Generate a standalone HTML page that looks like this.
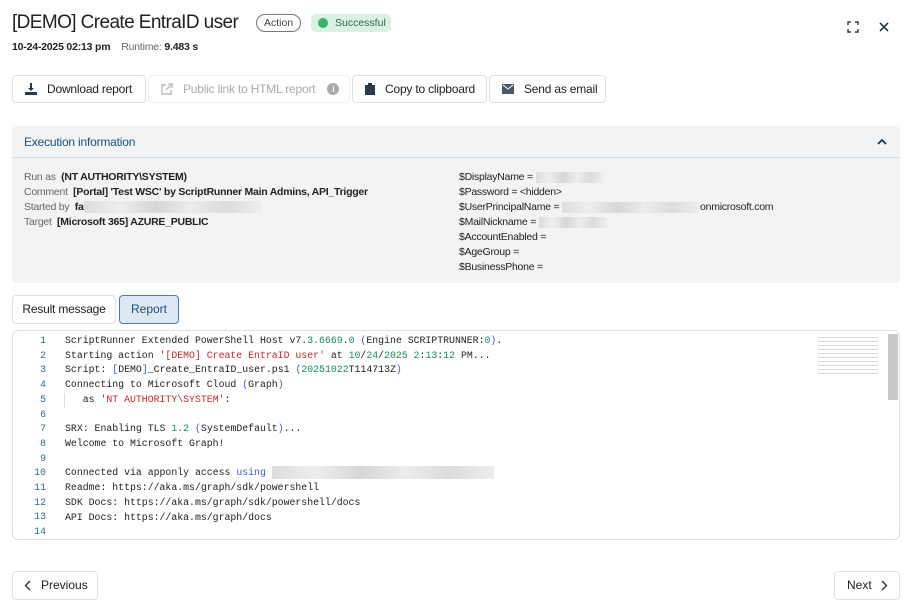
<!DOCTYPE html>
<html><head><meta charset="utf-8"><style>
*{box-sizing:border-box;margin:0;padding:0}
body{width:906px;height:606px;background:#fff;font-family:"Liberation Sans",sans-serif;color:#222;position:relative;overflow:hidden}
.abs{position:absolute}
.btn{position:absolute;top:75px;height:28px;border:1px solid #dde1e6;border-radius:4px;font-size:12px;display:flex;align-items:center;padding-left:12px;color:#222;background:#fff;letter-spacing:-0.2px}
.btn svg{margin-right:10px}
.code{font-family:"Liberation Mono",monospace;font-size:9.85px;line-height:14.7px;white-space:pre;color:#222}
.ln{position:absolute;left:14px;width:32px;text-align:right;color:#2a6f97;font-family:"Liberation Mono",monospace;font-size:9.85px;line-height:14.7px}
.s{color:#c0282d}.n{color:#1a8a5a}.b{color:#3b5bdb}
.blur{display:inline-block;background:linear-gradient(90deg,#ddd,#eee,#d6d6d6,#ececec,#dcdcdc,#eee);vertical-align:middle}
.ei{font-size:10.5px;line-height:15px;color:#222;letter-spacing:-0.25px}
.ei .k{color:#666}
</style></head><body>
<div class="abs" style="left:12px;top:12px;font-size:19px;letter-spacing:-0.6px;color:#222">[DEMO] Create EntraID user</div>
<div class="abs" style="left:256px;top:14px;height:18px;padding:0 7px;border:1px solid #777;border-radius:9px;font-size:10.5px;line-height:16px;color:#444">Action</div>
<div class="abs" style="left:311px;top:14px;height:18px;width:80px;background:#d9f2e1;border-radius:5px;font-size:10.5px;line-height:18px;color:#2a6b40;padding-left:24px">Successful
<span class="abs" style="left:7px;top:4px;width:10px;height:10px;border-radius:50%;background:#3bb36a"></span></div>
<div class="abs" style="left:12px;top:41px;font-size:10.5px;letter-spacing:-0.2px"><b>10-24-2025 02:13 pm</b> &nbsp;&nbsp; <span style="color:#666">Runtime:</span> <b>9.483 s</b></div>
<svg class="abs" style="left:847px;top:21px" width="12" height="12" viewBox="0 0 12 12" fill="none" stroke="#2b3a4a" stroke-width="1.4"><path d="M1 4V1h3M8 1h3v3M11 8v3H8M4 11H1V8"/></svg>
<svg class="abs" style="left:879px;top:22px" width="10" height="10" viewBox="0 0 10 10" stroke="#2b3a4a" stroke-width="1.6"><path d="M1 1l8 8M9 1l-8 8"/></svg>

<div class="btn" style="left:12px;width:134px"><svg width="12" height="12" viewBox="0 0 12 12" fill="#2b3a4a"><path d="M5 0h2v5h2L6 8 3 5h2zM0 9h12v3H0z"/></svg>Download report</div>
<div class="btn" style="left:148px;width:202px;color:#aaa;border-color:#eceef0"><svg width="12" height="12" viewBox="0 0 12 12" fill="none" stroke="#bbb" stroke-width="1.4"><path d="M5 2H1v9h9V7M7 1h4v4M11 1L5 7"/></svg>Public link to HTML report<span style="margin-left:12px;width:12px;height:12px;border-radius:50%;background:#aaa;color:#fff;font-size:9px;font-weight:bold;text-align:center;line-height:12px">i</span></div>
<div class="btn" style="left:352px;width:135px"><svg width="10" height="12" viewBox="0 0 10 12" fill="#2b3a4a"><path d="M0 2h3V0h4v2h3v10H0z"/></svg>Copy to clipboard</div>
<div class="btn" style="left:489px;width:117px"><svg width="12" height="10" viewBox="0 0 12 10"><rect width="12" height="10" fill="#4a5866"/><path d="M1 1l5 4 5-4" stroke="#fff" fill="none"/></svg>Send as email</div>

<div class="abs" style="left:12px;top:126px;width:888px;height:157px;background:#f1f3f5;border-radius:5px"></div>
<div class="abs" style="left:12px;top:157px;width:888px;height:1px;background:#d8dde2"></div>
<div class="abs" style="left:24px;top:135px;font-size:12px;color:#1d4f7a;letter-spacing:-0.2px">Execution information</div>
<svg class="abs" style="left:877px;top:138px" width="10" height="7" viewBox="0 0 10 7" fill="none" stroke="#1d3550" stroke-width="1.8"><path d="M1 6l4-4 4 4"/></svg>
<div class="abs ei" style="left:24px;top:170px">
<div><span class="k">Run as</span> &nbsp;<b>(NT AUTHORITY\SYSTEM)</b></div>
<div><span class="k">Comment</span> &nbsp;<b>[Portal] 'Test WSC' by ScriptRunner Main Admins, API_Trigger</b></div>
<div><span class="k">Started by</span> &nbsp;<b>fa</b><span class="blur" style="width:178px;height:12px"></span></div>
<div><span class="k">Target</span> &nbsp;<b>[Microsoft 365] AZURE_PUBLIC</b></div>
</div>
<div class="abs ei" style="left:459px;top:170px;height:100px;overflow:hidden">
<div>$DisplayName = <span class="blur" style="width:68px;height:11px"></span></div>
<div>$Password = &lt;hidden&gt;</div>
<div>$UserPrincipalName = <span class="blur" style="width:138px;height:11px"></span>onmicrosoft.com</div>
<div>$MailNickname = <span class="blur" style="width:68px;height:11px"></span></div>
<div>$AccountEnabled =</div>
<div>$AgeGroup =</div>
<div>$BusinessPhone =</div>
</div>

<div class="abs" style="left:12px;top:295px;width:104px;height:29px;border:1px solid #dde1e6;border-radius:4px;font-size:12px;line-height:27px;text-align:center;letter-spacing:-0.2px">Result message</div>
<div class="abs" style="left:119px;top:295px;width:60px;height:29px;border:1px solid #4a7aa8;background:#dce8f3;border-radius:4px;font-size:12px;line-height:27px;text-align:center;color:#1d4f7a">Report</div>

<div class="abs" style="left:12px;top:330px;width:888px;height:210px;border:1px solid #dde1e6;border-radius:6px;overflow:hidden">
<div class="abs" style="left:875px;top:3px;width:10px;height:66px;background:#c9c9c9"></div>
<div class="abs" style="left:805px;top:6px;width:60px;height:40px;background:repeating-linear-gradient(180deg,#bbb 0 1px,transparent 1px 4px);opacity:.6"></div>
</div>
<div class="ln" style="top:334px">1<br>2<br>3<br>4<br>5<br>6<br>7<br>8<br>9<br>10<br>11<br>12<br>13<br>14</div>
<div class="abs" style="left:64px;top:393px;width:1px;height:15px;background:#ddd"></div>
<div class="abs code" style="left:65px;top:334px">ScriptRunner Extended PowerShell Host v7.<span class="n">3.6669</span>.<span class="n">0</span> <span class="b">(</span>Engine SCRIPTRUNNER:<span class="n">0</span><span class="b">)</span>.
Starting action <span class="s">'[DEMO] Create EntraID user'</span> at <span class="n">10</span>/<span class="n">24</span>/<span class="n">2025</span> <span class="n">2</span>:<span class="n">13</span>:<span class="n">12</span> PM...
Script: <span class="b">[</span>DEMO<span class="b">]</span>_Create_EntraID_user.ps1 <span class="b">(</span><span class="n">20251022</span>T114713Z<span class="b">)</span>
Connecting to Microsoft Cloud <span class="b">(</span>Graph<span class="b">)</span>
   as <span class="s">'NT AUTHORITY\SYSTEM'</span>:

SRX: Enabling TLS <span class="n">1.2</span> <span class="b">(</span>SystemDefault<span class="b">)</span>...
Welcome to Microsoft Graph!

Connected via apponly access <span class="b">using</span> <span class="blur" style="width:222px;height:13px"></span>
Readme: https://aka.ms/graph/sdk/powershell
SDK Docs: https://aka.ms/graph/sdk/powershell/docs
API Docs: https://aka.ms/graph/docs
</div>

<div class="abs" style="left:12px;top:571px;width:86px;height:29px;border:1px solid #dde1e6;border-radius:4px;font-size:12px;line-height:27px;padding-left:28px">Previous
<svg class="abs" style="left:11px;top:8px" width="7" height="11" viewBox="0 0 7 11" fill="none" stroke="#333" stroke-width="1.4"><path d="M6 1L1.5 5.5 6 10"/></svg></div>
<div class="abs" style="left:834px;top:571px;width:66px;height:29px;border:1px solid #dde1e6;border-radius:4px;font-size:12px;line-height:27px;padding-left:12px">Next
<svg class="abs" style="left:46px;top:8px" width="7" height="11" viewBox="0 0 7 11" fill="none" stroke="#333" stroke-width="1.4"><path d="M1 1l4.5 4.5L1 10"/></svg></div>
</body></html>
